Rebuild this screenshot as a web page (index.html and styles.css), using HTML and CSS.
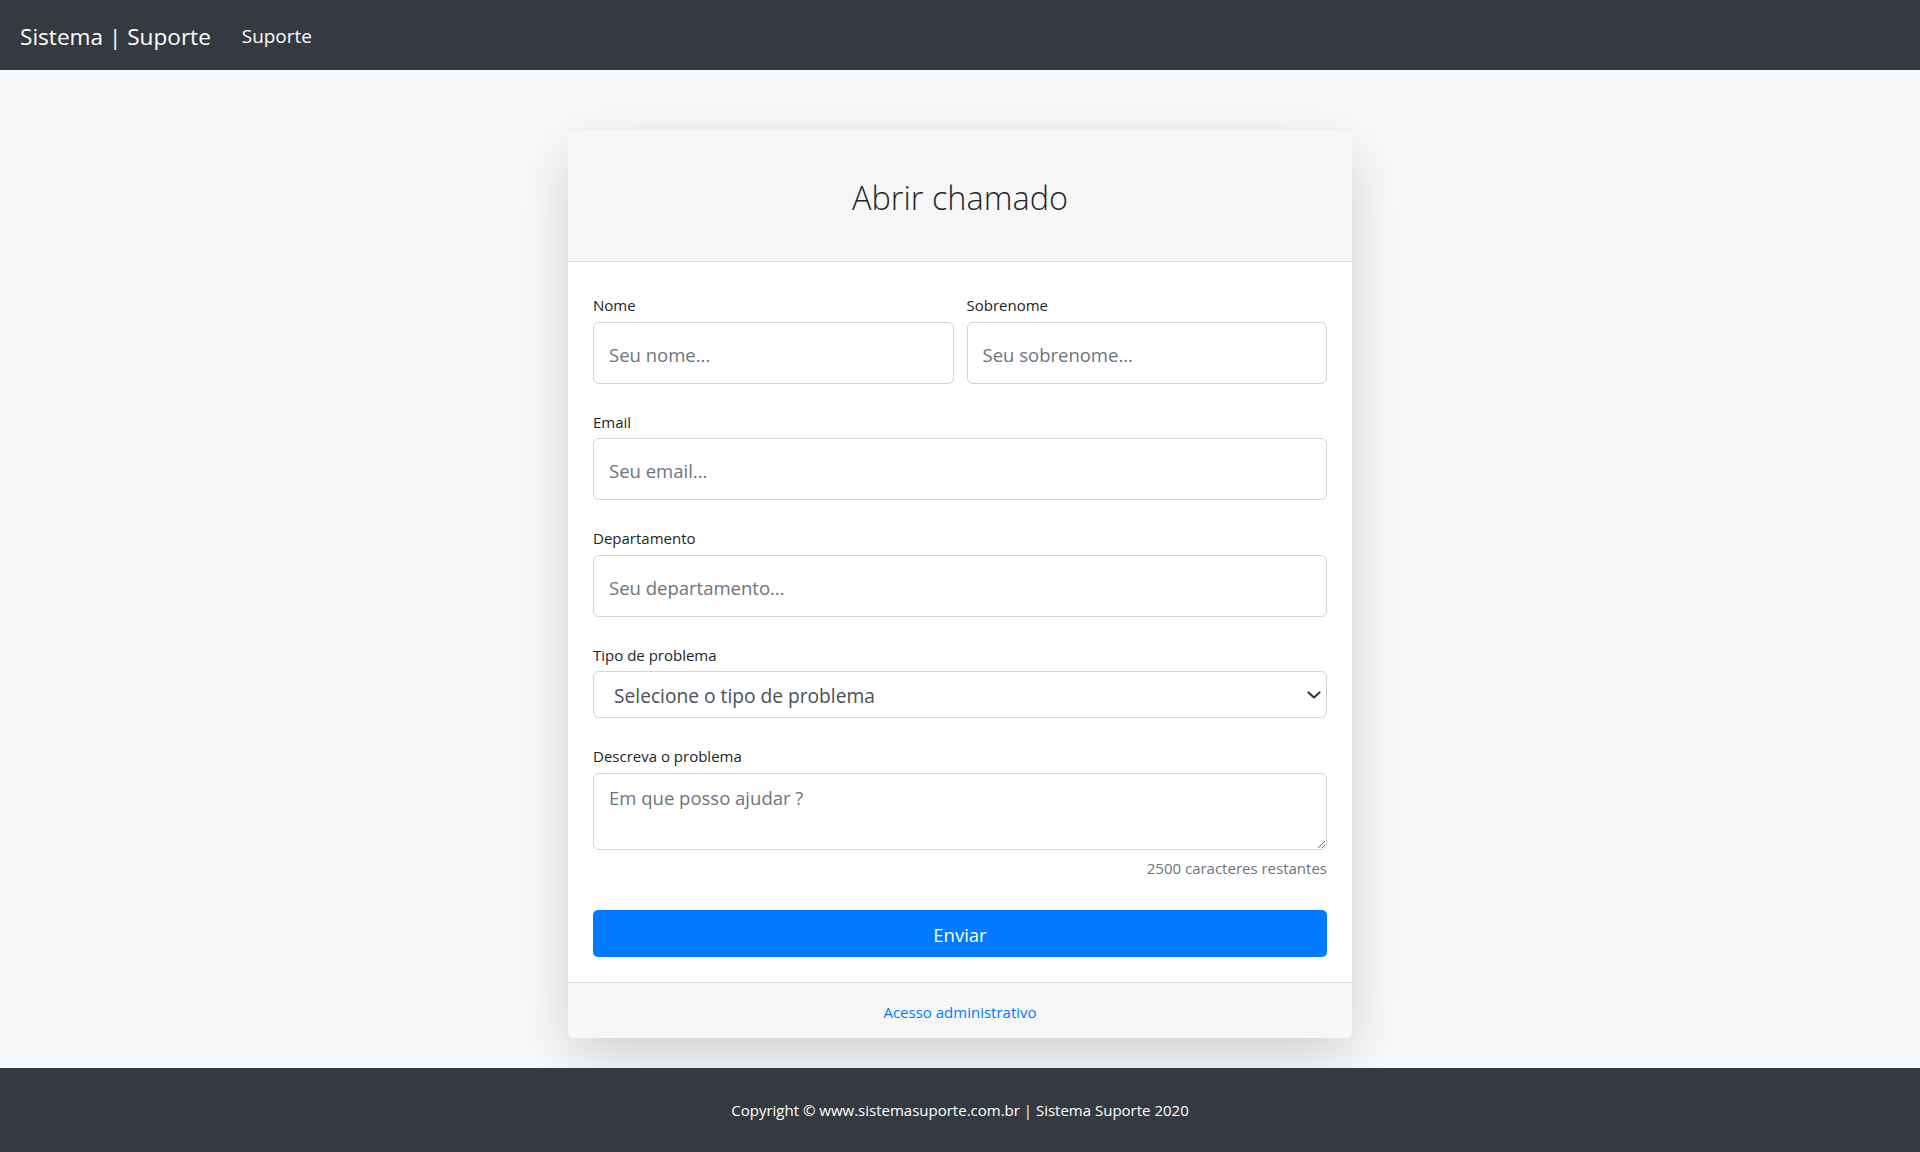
FILE: index.html
```html
<!DOCTYPE html>
<html lang="pt-br">
<head>
<meta charset="utf-8">
<title>Sistema | Suporte</title>
<link rel="stylesheet" href="styles.css">
</head>
<body>
<header class="navbar">
  <a class="brand" href="#">Sistema | Suporte</a>
  <a class="nav-link" href="#">Suporte</a>
</header>
<main class="main">
  <div class="card">
    <div class="card-header">
      <h3 class="card-title">Abrir chamado</h3>
    </div>
    <form class="card-body">
      <div class="form-row">
        <div class="form-group">
          <label class="label">Nome</label>
          <input class="input" type="text" placeholder="Seu nome...">
        </div>
        <div class="form-group">
          <label class="label">Sobrenome</label>
          <input class="input" type="text" placeholder="Seu sobrenome...">
        </div>
      </div>
      <div class="form-group">
        <label class="label">Email</label>
        <input class="input" type="text" placeholder="Seu email...">
      </div>
      <div class="form-group">
        <label class="label">Departamento</label>
        <input class="input" type="text" placeholder="Seu departamento...">
      </div>
      <div class="form-group">
        <label class="label">Tipo de problema</label>
        <div class="select-wrap">
          <select class="select">
            <option>Selecione o tipo de problema</option>
          </select>
          <svg class="chevron" width="14" height="8" viewBox="0 0 14 8"><polyline points="1.5,1.5 7,6.5 12.5,1.5" fill="none" stroke="#343a40" stroke-width="2.2" stroke-linecap="round" stroke-linejoin="round"/></svg>
        </div>
      </div>
      <div class="form-group last">
        <label class="label">Descreva o problema</label>
        <textarea class="textarea" placeholder="Em que posso ajudar ?"></textarea>
        <div class="counter">2500 caracteres restantes</div>
      </div>
      <button class="btn" type="button">Enviar</button>
    </form>
    <div class="card-footer">
      <a class="admin-link" href="#">Acesso administrativo</a>
    </div>
  </div>
</main>
<footer class="site-footer">
  <span>Copyright © www.sistemasuporte.com.br | Sistema Suporte 2020</span>
</footer>
</body>
</html>
```
FILE: styles.css
```css
* { box-sizing: border-box; }
html, body { margin: 0; padding: 0; }
body {
  font-family: "Open Sans", "Noto Sans", sans-serif;
  color: #212529;
  background: #f8f9fa;
  min-height: 1152px;
  display: flex;
  flex-direction: column;
}
.navbar {
  height: 70px;
  background: #343a40;
  display: flex;
  align-items: center;
  padding: 0 20px;
}
.brand {
  color: #fff;
  text-decoration: none;
  font-size: 22.6px;
  line-height: 37px;
  margin-right: 20px;
  margin-top: 3px;
}
.nav-link {
  color: #fff;
  text-decoration: none;
  font-size: 18.9px;
  padding: 0 10px 0 11px;
  margin-top: 1px;
}
.main {
  flex: 1;
  padding: 60px 0 30px;
}
.card {
  width: 784px;
  margin: 0 auto;
  background: #fff;
  border-radius: 6px;
  box-shadow: 0 20px 60px rgba(0, 0, 0, 0.16);
}
.card-header {
  height: 132px;
  background: #f7f7f7;
  border-bottom: 1px solid #dcdcdc;
  border-radius: 6px 6px 0 0;
  display: flex;
  align-items: center;
  justify-content: center;
}
.card-title {
  margin: 0;
  font-weight: 300;
  font-size: 32.5px;
  line-height: 40px;
  color: #212529;
  padding-top: 4px;
}
.card-body {
  padding: 25px;
  margin: 0;
}
.form-row {
  display: grid;
  grid-template-columns: 1fr 1fr;
  column-gap: 13px;
}
.form-group { margin-bottom: 20px; }
.form-group.last { margin-bottom: 0; }
.label {
  display: block;
  font-size: 15px;
  line-height: 24.5px;
  padding-top: 6px;
  margin-bottom: 4px;
  color: #212529;
}
.input, .select, .textarea {
  display: block;
  width: 100%;
  font-family: inherit;
  font-size: 18.5px;
  color: #495057;
  background: #fff;
  border: 1px solid #ced4da;
  border-radius: 6px;
  outline: none;
  margin: 0;
}
.input {
  height: 62px;
  padding: 3px 15px 0;
}
.input::placeholder, .textarea::placeholder { color: #6c757d; opacity: 1; }
.select-wrap { position: relative; }
.select {
  height: 47px;
  padding: 2px 40px 0 20px;
  font-size: 19.2px;
  -webkit-appearance: none;
  appearance: none;
}
.chevron {
  position: absolute;
  right: 6px;
  top: 20px;
  pointer-events: none;
}
.textarea {
  height: 77px;
  padding: 9px 15px;
  line-height: 30px;
  resize: vertical;
}
.counter {
  text-align: right;
  font-size: 15px;
  line-height: 24px;
  margin-top: 6px;
  color: #6c757d;
}
.btn {
  display: block;
  width: 100%;
  height: 47px;
  margin-top: 30.5px;
  background: #007bff;
  color: #fff;
  border: 0;
  border-radius: 5px;
  font-family: inherit;
  font-size: 18.5px;
  padding: 2px 0 0;
}
.card-footer {
  height: 56px;
  background: #f7f7f7;
  border-top: 1px solid #dcdcdc;
  border-radius: 0 0 6px 6px;
  display: flex;
  align-items: center;
  justify-content: center;
}
.admin-link {
  color: #007bff;
  text-decoration: none;
  font-size: 15px;
  padding-top: 2px;
}
.site-footer {
  height: 84px;
  background: #343a40;
  color: #fff;
  display: flex;
  align-items: center;
  justify-content: center;
  font-size: 15px;
}
```
